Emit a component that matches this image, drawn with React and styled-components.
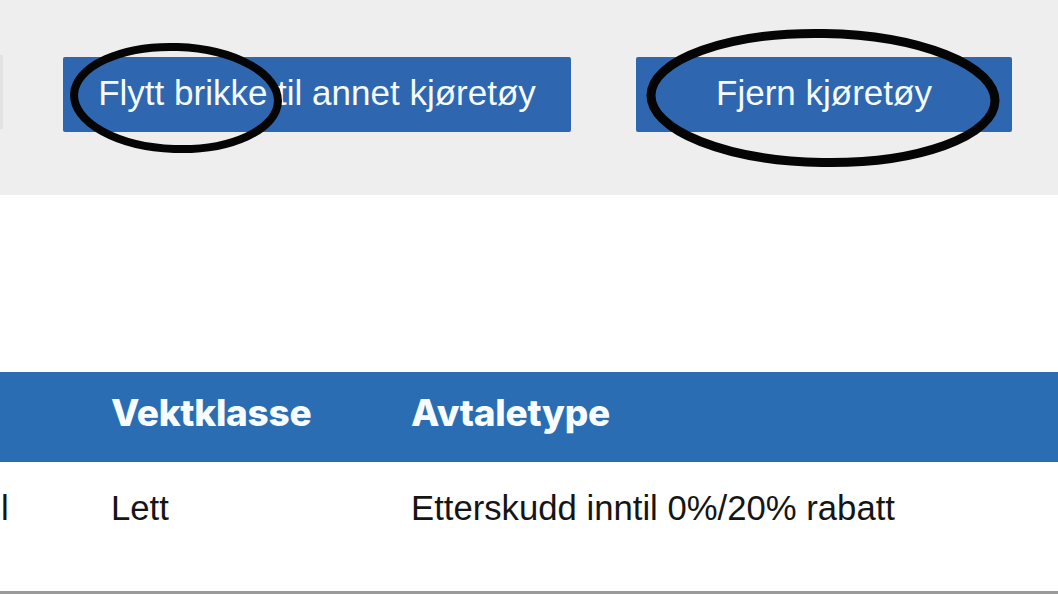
import React from "react";
import styled, { createGlobalStyle } from "styled-components";

const Global = createGlobalStyle`
  html, body { margin: 0; padding: 0; background: #ffffff; }
  body { width: 1058px; height: 594px; overflow: hidden; font-family: "Liberation Sans", Arial, sans-serif; }
`;

const Page = styled.div`
  position: relative;
  width: 1058px;
  height: 594px;
  display: flex;
  flex-direction: column;
  background: #ffffff;
`;

const Toolbar = styled.div`
  height: 195px;
  background: #eeeeee;
  display: flex;
  align-items: flex-start;
  padding-top: 57px;
  box-sizing: border-box;
`;

const EdgeStub = styled.div`
  width: 3px;
  height: 74px;
  margin-top: -2px;
  background: #e2e2e2;
  margin-right: 60px;
`;

const ActionButton = styled.button`
  width: ${(p) => p.$w}px;
  height: 75px;
  margin-right: ${(p) => p.$mr || 0}px;
  border: none;
  border-radius: 2px;
  background: #2e66af;
  color: #f4fbff;
  font-family: "Liberation Sans", Arial, sans-serif;
  font-size: 35px;
  padding: 0 0 3px;
  display: flex;
  align-items: center;
  justify-content: center;
  white-space: nowrap;
  cursor: pointer;
`;

const Spacer = styled.div`
  height: 177px;
`;

const Table = styled.div`
  display: flex;
  flex-direction: column;
  flex: 1;
  border-bottom: 3px solid #9a9a9a;
`;

const Row = styled.div`
  display: grid;
  grid-template-columns: 111px 300px 1fr;
  height: ${(p) => p.$h}px;
  background: ${(p) => p.$bg};
  box-sizing: border-box;
`;

const HeadCell = styled.div`
  font-family: Inter, "Open Sans", sans-serif;
  font-weight: 800;
  font-size: 37px;
  letter-spacing: -0.3px;
  color: #f6fcff;
  padding-top: 21px;
  line-height: 40px;
  white-space: nowrap;
`;

const Cell = styled.div`
  font-family: "Liberation Sans", Arial, sans-serif;
  font-size: 34.7px;
  color: #151515;
  padding-top: 26px;
  line-height: 40px;
  white-space: nowrap;
  padding-left: ${(p) => p.$pl || 0}px;
`;

const Overlay = styled.svg`
  position: absolute;
  left: 0;
  top: 0;
  pointer-events: none;
`;

export default function App() {
  return (
    <>
      <Global />
      <Page>
        <Toolbar>
          <EdgeStub />
          <ActionButton $w={508} $mr={65}>Flytt brikke til annet kjøretøy</ActionButton>
          <ActionButton $w={376}>Fjern kjøretøy</ActionButton>
        </Toolbar>
        <Spacer />
        <Table>
          <Row $h={90} $bg="#2a6db3">
            <HeadCell />
            <HeadCell>Vektklasse</HeadCell>
            <HeadCell>Avtaletype</HeadCell>
          </Row>
          <Row $h={129} $bg="#ffffff">
            <Cell $pl={1}>l</Cell>
            <Cell>Lett</Cell>
            <Cell>Etterskudd inntil 0%/20% rabatt</Cell>
          </Row>
        </Table>
        <Overlay width="1058" height="594" viewBox="0 0 1058 594">
          <ellipse cx="176" cy="98" rx="102" ry="51" fill="none" stroke="#050505" strokeWidth="8" transform="rotate(2 176 98)" />
          <ellipse cx="823" cy="98" rx="172" ry="64.5" fill="none" stroke="#050505" strokeWidth="9" transform="rotate(1 823 98)" />
        </Overlay>
      </Page>
    </>
  );
}
